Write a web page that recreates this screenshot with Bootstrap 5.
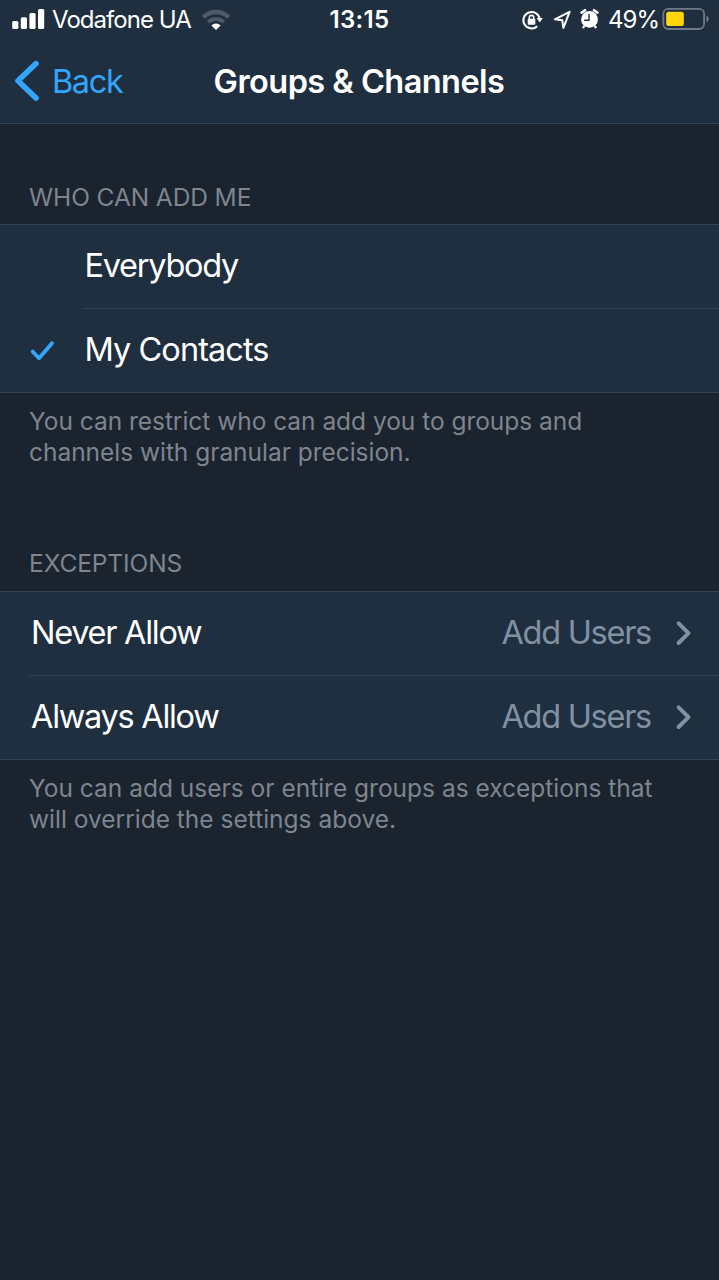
<!DOCTYPE html>
<html lang="en">
<head>
<meta charset="utf-8">
<meta name="viewport" content="width=device-width, initial-scale=1">
<title>Groups &amp; Channels</title>
<link href="https://cdn.jsdelivr.net/npm/bootstrap@5.3.0/dist/css/bootstrap.min.css" rel="stylesheet">
<style>
  :root { --panel: #202f3f; --rule: #344353; --muted: #7e858e; --accent: #31a6fb; }
  body { min-height: 100vh; background: #1a232e; color: #fff; font-family: Inter, "Liberation Sans", sans-serif; font-size: 32.5px; letter-spacing: -1.28px; }
  svg { display: block; flex: none; }
  .side { flex: 1 1 0; min-width: 0; }
  .top-area { height: 124px; background: var(--panel); border-bottom: 1px solid var(--rule); }
  .status-row { height: 40px; font-size: 24px; line-height: 40px; letter-spacing: -.95px; }
  .clock { letter-spacing: .3px; }
  .title-row { height: 83px; line-height: 81px; }
  .title-row h1 { font-size: 32.5px; line-height: 81px; letter-spacing: -.55px; padding-right: 1px; }
  .back-link { color: var(--accent); letter-spacing: -1.4px; }
  .caption-head { height: 100px; padding: 0 29px 9px; font-size: 24.5px; line-height: 36px; letter-spacing: -.1px; color: var(--muted); }
  .caption-head.second { height: 123px; padding-bottom: 10px; }
  .option-list { --bs-list-group-bg: var(--panel); --bs-list-group-color: #fff; --bs-list-group-border-radius: 0; background: var(--panel); border-top: 1px solid var(--rule); border-bottom: 1px solid var(--rule); }
  .option-list .list-group-item { height: 83px; padding: 0; border: 0; line-height: 82px; }
  .option-list .list-group-item + .list-group-item { height: 84px; }
  .option-list .cell { margin-left: -1px; padding-left: .5px; }
  .option-list .list-group-item + .list-group-item .cell { border-top: 1px solid var(--rule); }
  .option-list .link-cell { margin-left: 0; padding: 0 0 2px 1px; }
  .tick-slot { width: 85px; padding: 2px 0 0 30px; }
  .my-contacts { letter-spacing: -.95px; }
  .indent { width: 30px; }
  .note { height: 75px; padding: 13px 29px 0; font-size: 24.5px; line-height: 30.7px; letter-spacing: -.03px; color: var(--muted); white-space: nowrap; }
  .note.wide { letter-spacing: 0; }
  .value { color: #8091a2; }
</style>
</head>
<body>
<header class="top-area">
  <div class="status-row d-flex align-items-center">
    <div class="side d-flex align-items-center">
      <svg width="52" height="40" viewBox="0 0 52 40" fill="#fff"><rect x="12.2" y="21" width="6.2" height="8" rx="1.6"/><rect x="20.8" y="17.2" width="6.2" height="11.8" rx="1.6"/><rect x="29.4" y="13" width="6.2" height="16" rx="1.6"/><rect x="38" y="9" width="6.2" height="20" rx="1.6"/></svg>
      <span>Vodafone UA</span>
      <svg class="ms-2" width="32" height="40" viewBox="199 0 32 40" fill="none"><path d="M203.3 17.3a18 18 0 0 1 25.4 0" stroke="#4b5969" stroke-width="4.4"/><path d="M208.2 22.2a11 11 0 0 1 15.6 0" stroke="#4b5969" stroke-width="4"/><path d="M216 30l-4.6-4.6a6.6 6.6 0 0 1 9.2 0z" fill="#fff"/></svg>
    </div>
    <div class="clock fw-semibold">13:15</div>
    <div class="side d-flex align-items-center justify-content-end">
      <svg width="88" height="40" viewBox="520 0 88 40" fill="none" stroke="#fff" stroke-width="1.8">
        <path d="M537.2 26.2A8.2 8.2 0 1 1 539.7 19" stroke-width="2"/><path d="M536.6 18h6.2l-3.1 4.6z" fill="#fff" stroke="none"/>
        <rect x="527.7" y="18.8" width="7.6" height="6" rx="1" fill="#fff" stroke="none"/><path d="M529.3 19.5v-1.9a2.2 2.2 0 0 1 4.4 0v1.9" stroke-width="1.6"/>
        <path d="M569.6 11.8L554.8 19.3L562.3 20.3L563.4 27.8Z" stroke-linejoin="round" stroke-width="2"/>
        <circle cx="589.5" cy="19.4" r="8.4" fill="#fff" stroke="none"/>
        <path d="M581.6 12.6l3.4-2.4M597.4 12.6l-3.4-2.4" stroke-width="2.6" stroke-linecap="round"/><path d="M584.4 26l-1.6 2M594.6 26l1.6 2" stroke-width="2.2"/>
        <path d="M589 14v6.2h-4.8" stroke="#202f3f" stroke-width="1.4"/>
      </svg>
      <span>49%</span>
      <svg width="60" height="40" viewBox="659 0 60 40"><rect x="663.3" y="8.8" width="40.8" height="20.2" rx="5" fill="none" stroke="#6e7985" stroke-width="1.8"/><rect x="666.2" y="11.8" width="17.6" height="14.3" rx="2.5" fill="#ffd60a"/><path d="M706.4 15.4q2.4 1.2 2.4 3.6t-2.4 3.6z" fill="#6e7985"/></svg>
    </div>
  </div>
  <div class="title-row d-flex align-items-center">
    <a class="side back-link d-flex align-items-center text-decoration-none" href="#">
      <svg width="52" height="83" viewBox="0 40 52 83" fill="none" stroke="currentColor" stroke-width="5.6" stroke-linecap="round" stroke-linejoin="round"><path d="M36 63.6L18 80.8L36 98"/></svg>
      <span>Back</span>
    </a>
    <h1 class="m-0 fw-semibold">Groups &amp; Channels</h1>
    <div class="side"></div>
  </div>
</header>
<main>
  <h2 class="caption-head m-0 d-flex align-items-end fw-normal">WHO CAN ADD ME</h2>
  <div class="list-group list-group-flush option-list">
    <div class="list-group-item d-flex"><span class="tick-slot"></span><span class="cell flex-fill">Everybody</span></div>
    <div class="list-group-item d-flex">
      <span class="tick-slot d-flex align-items-center"><svg width="26" height="22" viewBox="30 340 26 22" fill="none" stroke="#31a6fb" stroke-width="3.8" stroke-linecap="round" stroke-linejoin="round"><path d="M32.7 351.6L39 358.2L52 343.2"/></svg></span>
      <span class="cell flex-fill my-contacts">My Contacts</span>
    </div>
  </div>
  <p class="note m-0">You can restrict who can add you to groups and<br>channels with granular precision.</p>
  <h2 class="caption-head second m-0 d-flex align-items-end fw-normal">EXCEPTIONS</h2>
  <div class="list-group list-group-flush option-list">
    <div class="list-group-item d-flex"><span class="indent"></span><span class="cell link-cell flex-fill d-flex align-items-center"><span>Never Allow</span><span class="value ms-auto">Add Users</span><svg width="68" height="82" viewBox="651 592 68 82" fill="none" stroke="#8091a2" stroke-width="4" stroke-linecap="round" stroke-linejoin="round"><path d="M678.6 623.4L688.5 633.2L678.6 643"/></svg></span></div>
    <div class="list-group-item d-flex"><span class="indent"></span><span class="cell link-cell flex-fill d-flex align-items-center"><span>Always Allow</span><span class="value ms-auto">Add Users</span><svg width="68" height="82" viewBox="651 592 68 82" fill="none" stroke="#8091a2" stroke-width="4" stroke-linecap="round" stroke-linejoin="round"><path d="M678.6 623.4L688.5 633.2L678.6 643"/></svg></span></div>
  </div>
  <p class="note wide m-0">You can add users or entire groups as exceptions that<br>will override the settings above.</p>
</main>
<script src="https://cdn.jsdelivr.net/npm/bootstrap@5.3.0/dist/js/bootstrap.bundle.min.js"></script>
</body>
</html>
